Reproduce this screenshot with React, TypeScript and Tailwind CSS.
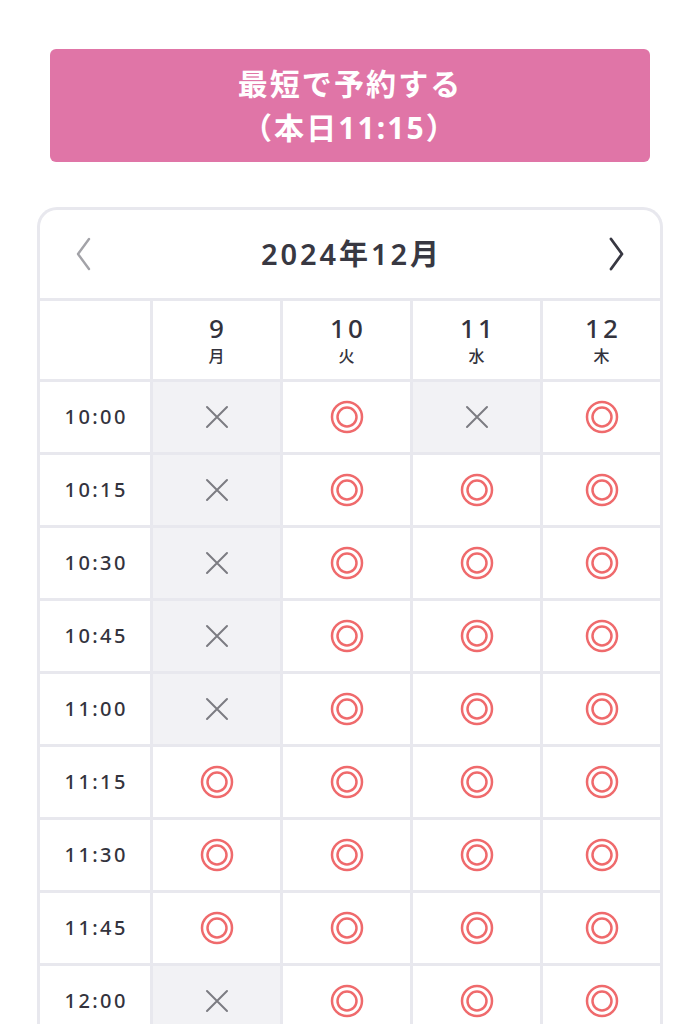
import React from 'react';

type Slot = 'o' | 'x';

const days = [
  { num: '9', wd: '月' },
  { num: '10', wd: '火' },
  { num: '11', wd: '水' },
  { num: '12', wd: '木' },
];

const rows: { time: string; slots: Slot[] }[] = [
  { time: '10:00', slots: ['x', 'o', 'x', 'o'] },
  { time: '10:15', slots: ['x', 'o', 'o', 'o'] },
  { time: '10:30', slots: ['x', 'o', 'o', 'o'] },
  { time: '10:45', slots: ['x', 'o', 'o', 'o'] },
  { time: '11:00', slots: ['x', 'o', 'o', 'o'] },
  { time: '11:15', slots: ['o', 'o', 'o', 'o'] },
  { time: '11:30', slots: ['o', 'o', 'o', 'o'] },
  { time: '11:45', slots: ['o', 'o', 'o', 'o'] },
  { time: '12:00', slots: ['x', 'o', 'o', 'o'] },
];

const font = { fontFamily: '"Noto Sans", "Noto Sans CJK JP", sans-serif' };

const DoubleCircle = () => (
  <svg width="34" height="34" viewBox="0 0 34 34" fill="none" stroke="#ef6a6c" strokeWidth="2.5">
    <circle cx="17" cy="17" r="15" />
    <circle cx="17" cy="17" r="9.5" />
  </svg>
);

const Cross = () => (
  <svg width="24" height="24" viewBox="0 0 24 24" fill="none" stroke="#7c7c82" strokeWidth="2" strokeLinecap="round">
    <path d="M2 2L22 22M22 2L2 22" />
  </svg>
);

const App: React.FC = () => {
  return (
    <div className="w-[700px] h-[1024px] overflow-hidden bg-white" style={font}>
      {/* quick booking button */}
      <div className="mx-[50px] mt-[49px] h-[113px] rounded-[6px] bg-[#e075a7] flex flex-col items-center justify-center text-white font-bold text-[30px] leading-[44px] tracking-[0.07em]">
        <span>最短で予約する</span>
        <span>（本日11:15）</span>
      </div>

      {/* calendar */}
      <div className="mx-[37px] mt-[45px] border-[3px] border-b-0 border-[#e8e8ee] rounded-t-[20px] overflow-hidden">
        <div className="h-[88px] flex items-center justify-between px-[35px]">
          <svg width="16" height="34" viewBox="0 0 16 34" fill="none" stroke="#a3a3a8" strokeWidth="2.4" strokeLinecap="round" strokeLinejoin="round">
            <path d="M14 2L3 17L14 32" />
          </svg>
          <span className="text-[29px] font-semibold tracking-[0.1em] pl-[0.1em] text-[#383842]">2024年12月</span>
          <svg width="16" height="34" viewBox="0 0 16 34" fill="none" stroke="#383842" strokeWidth="2.8" strokeLinecap="round" strokeLinejoin="round">
            <path d="M2 2L13 17L2 32" />
          </svg>
        </div>

        <div className="grid grid-cols-[110px_127px_127px_127px_117px] gap-[3px] bg-[#e8e8ee] border-t-[3px] border-[#e8e8ee]">
          <div className="h-[78px] bg-white" />
          {days.map((d) => (
            <div key={d.num} className="h-[78px] bg-white flex flex-col items-center justify-center gap-[6px] text-[#33333d]">
              <span className="text-[26px] leading-[26px] font-medium tracking-[0.12em] pl-[0.12em]">{d.num}</span>
              <span className="text-[16px] leading-[18px] font-medium">{d.wd}</span>
            </div>
          ))}

          {rows.map((r) => (
            <React.Fragment key={r.time}>
              <div className="h-[70px] bg-white flex items-center justify-center text-[20px] leading-[24px] font-medium tracking-[0.12em] pl-[0.12em] text-[#33333d]">
                {r.time}
              </div>
              {r.slots.map((s, i) => (
                <div
                  key={i}
                  className={`h-[70px] flex items-center justify-center ${s === 'x' ? 'bg-[#f2f2f5]' : 'bg-white'}`}
                >
                  {s === 'o' ? <DoubleCircle /> : <Cross />}
                </div>
              ))}
            </React.Fragment>
          ))}
        </div>
      </div>
    </div>
  );
};

export default App;
